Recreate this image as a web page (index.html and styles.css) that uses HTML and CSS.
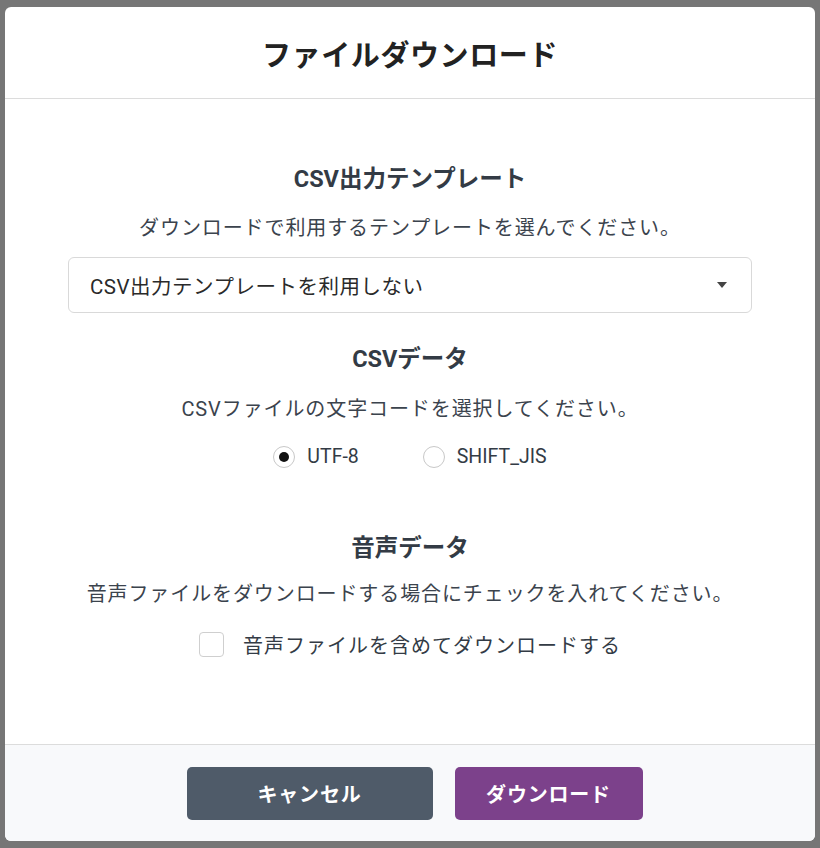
FILE: index.html
```html
<!DOCTYPE html>
<html lang="ja">
<head>
  <meta charset="UTF-8">
  <meta name="viewport" content="width=device-width, initial-scale=1.0">
  <title>ファイルダウンロード</title>
  <link rel="stylesheet" href="styles.css">
</head>
<body>
  <div class="modal">
    <div class="modal-header">
      <h1 class="modal-title">ファイルダウンロード</h1>
    </div>

    <div class="modal-body">
      <section class="section section-template">
        <h2 class="section-title">CSV出力テンプレート</h2>
        <p class="section-desc">ダウンロードで利用するテンプレートを選んでください。</p>
        <div class="select-box">
          <span>CSV出力テンプレートを利用しない</span>
          <span class="caret"></span>
        </div>
      </section>

      <section class="section section-csv">
        <h2 class="section-title">CSVデータ</h2>
        <p class="section-desc">CSVファイルの文字コードを選択してください。</p>
        <div class="radio-group">
          <label class="radio-item">
            <span class="radio checked"></span>
            <span>UTF-8</span>
          </label>
          <label class="radio-item">
            <span class="radio"></span>
            <span>SHIFT_JIS</span>
          </label>
        </div>
      </section>

      <section class="section section-audio">
        <h2 class="section-title">音声データ</h2>
        <p class="section-desc">音声ファイルをダウンロードする場合にチェックを入れてください。</p>
        <label class="check-item">
          <span class="checkbox"></span>
          <span>音声ファイルを含めてダウンロードする</span>
        </label>
      </section>
    </div>

    <div class="modal-footer">
      <button class="btn btn-cancel">キャンセル</button>
      <button class="btn btn-download">ダウンロード</button>
    </div>
  </div>
</body>
</html>
```

FILE: styles.css
```css
body {
  margin: 0;
  padding: 7px 5px;
  font-family: Roboto, "Noto Sans CJK JP", sans-serif;
  background-color: #767676;
  color: #333b45;
}

.modal {
  width: 810px;
  height: 834px;
  background-color: white;
  border-radius: 6px;
  overflow: hidden;
  display: flex;
  flex-direction: column;
}

.modal-header {
  height: 91px;
  border-bottom: 1px solid #dcdcdc;
  display: flex;
  align-items: center;
  justify-content: center;
}

.modal-title {
  margin: 0;
  font-size: 29px;
  font-weight: bold;
  letter-spacing: 0.6px;
  color: #222;
}

.modal-body {
  flex: 1;
  padding: 64px 63px 0;
  text-align: center;
}

.section {
  display: flex;
  flex-direction: column;
  align-items: center;
}

.section-csv {
  margin-top: 30px;
}

.section-audio {
  margin-top: 64px;
}

.section-title {
  margin: 0;
  font-size: 23.5px;
  line-height: 32px;
  font-weight: bold;
  color: #333b45;
}

.section-desc {
  margin: 20px 0 0;
  font-size: 20px;
  line-height: 27px;
  letter-spacing: 0.9px;
  color: #3b434d;
}

.section-csv .section-desc {
  margin-top: 21px;
}

.section-audio .section-desc {
  margin-top: 17px;
}

.select-box {
  align-self: stretch;
  box-sizing: border-box;
  height: 56px;
  margin-top: 15px;
  padding: 0 24px 0 21px;
  border: 1px solid #d9d9d9;
  border-radius: 6px;
  display: flex;
  align-items: center;
  justify-content: space-between;
  font-size: 20.5px;
  letter-spacing: 0.5px;
  color: #2a2a2a;
}

.caret {
  width: 0;
  height: 0;
  border-left: 5px solid transparent;
  border-right: 5px solid transparent;
  border-top: 6px solid #444;
}

.radio-group {
  margin-top: 22px;
  display: flex;
  gap: 64px;
}

.radio-item,
.check-item {
  display: flex;
  align-items: center;
  color: #333b45;
}

.radio-item {
  font-size: 19.5px;
}

.radio {
  box-sizing: border-box;
  width: 22px;
  height: 22px;
  margin-right: 12px;
  border: 1px solid #c8c8c8;
  border-radius: 50%;
  display: flex;
  align-items: center;
  justify-content: center;
}

.radio.checked::after {
  content: '';
  width: 10px;
  height: 10px;
  border-radius: 50%;
  background-color: #111;
}

.check-item {
  margin-top: 22px;
  font-size: 20px;
  letter-spacing: 1px;
}

.checkbox {
  box-sizing: border-box;
  width: 25px;
  height: 25px;
  margin-right: 19px;
  border: 1px solid #cfcfcf;
  border-radius: 4px;
}

.modal-footer {
  height: 96px;
  border-top: 1px solid #dcdcdc;
  background-color: #f8f9fb;
  display: flex;
  align-items: center;
  justify-content: center;
  gap: 22px;
  padding-left: 9px;
}

.btn {
  height: 53px;
  border: none;
  border-radius: 5px;
  font-family: inherit;
  font-size: 20px;
  font-weight: bold;
  letter-spacing: 0.8px;
  color: white;
  cursor: pointer;
}

.btn-cancel {
  width: 246px;
  background-color: #4f5b69;
}

.btn-download {
  width: 188px;
  background-color: #7c418b;
}
```
